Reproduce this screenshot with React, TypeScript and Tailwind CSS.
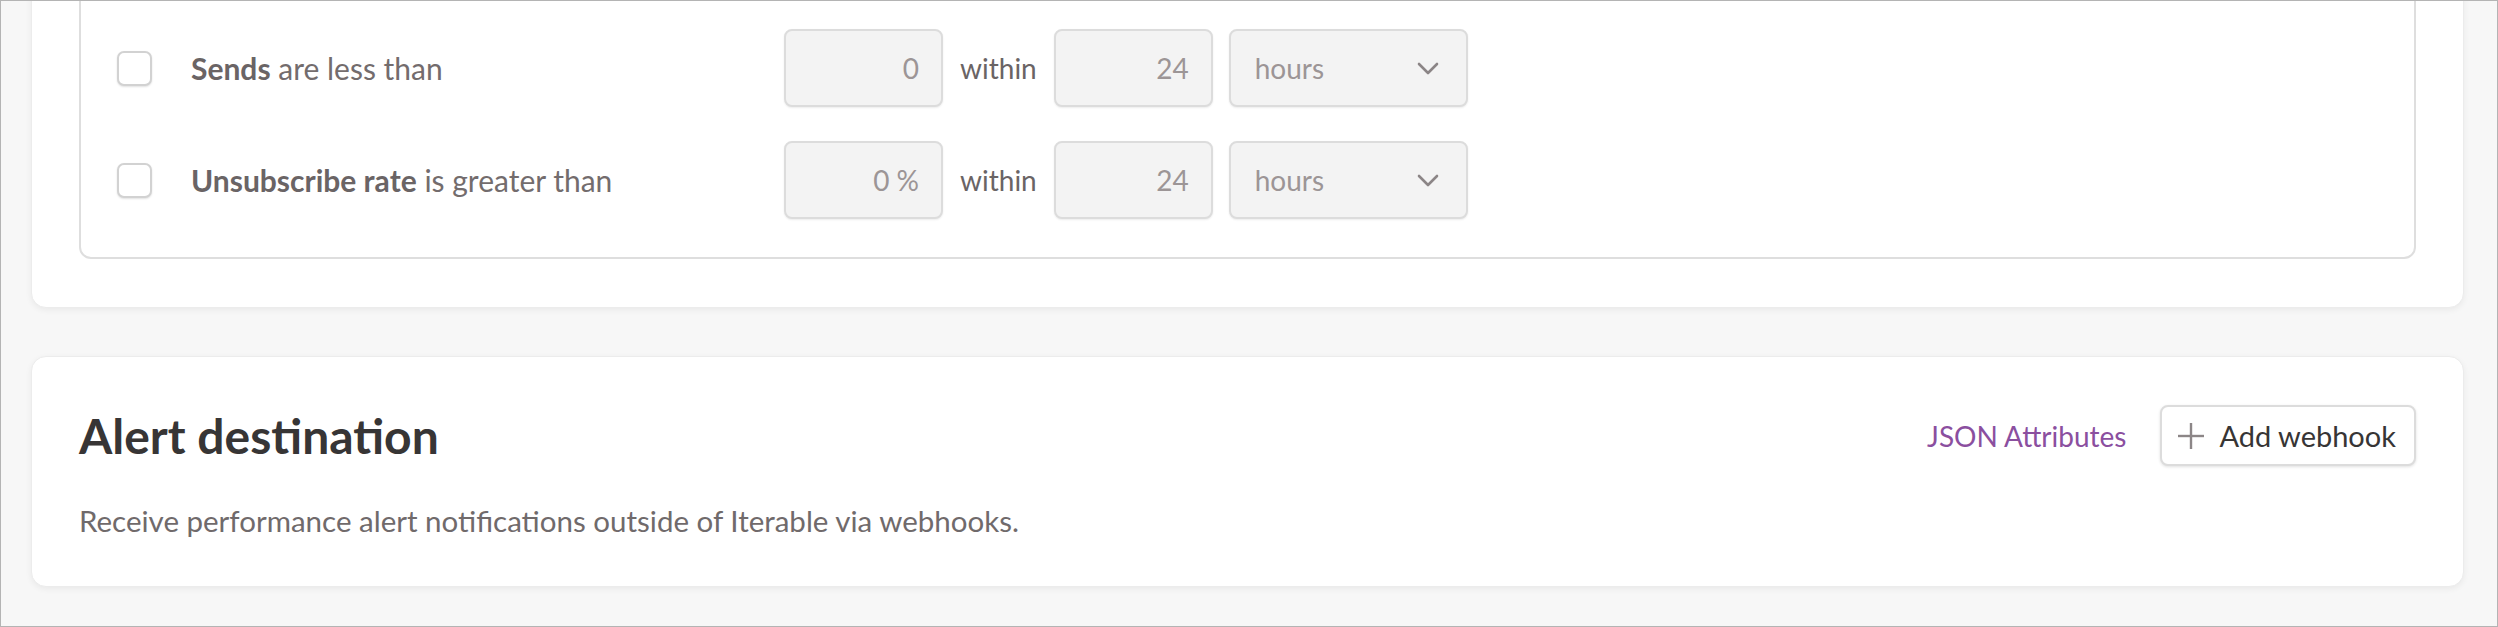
import React from 'react';

const rows = [
  { strong: 'Sends', rest: ' are less than', value: '0', within: '24', unit: 'hours' },
  { strong: 'Unsubscribe rate', rest: ' is greater than', value: '0 %', within: '24', unit: 'hours' },
];

const Chevron = () => (
  <svg width="22" height="13" viewBox="0 0 22 13" fill="none">
    <polyline points="2,2 11,11 20,2" stroke="#8b8586" strokeWidth="2.6" strokeLinecap="round" strokeLinejoin="round" />
  </svg>
);

const PlusIcon = () => (
  <svg width="28" height="28" viewBox="0 0 28 28" fill="none">
    <line x1="14" y1="1" x2="14" y2="27" stroke="#8c8687" strokeWidth="2.4" />
    <line x1="1" y1="14" x2="27" y2="14" stroke="#8c8687" strokeWidth="2.4" />
  </svg>
);

export default function App() {
  return (
    <div
      className="h-[627px] w-full overflow-hidden border border-[#b4b4b4] bg-[#f7f7f7] pl-[30px] pr-[33px]"
      style={{ fontFamily: 'Lato, "Noto Sans", sans-serif' }}
    >
      {/* Alert criteria card (scrolled, top is cut off) */}
      <div className="mt-[-61px] rounded-[15px] border border-[#ececec] bg-white px-[47px] pb-[48px] pt-[48px] shadow-[0_2px_6px_rgba(0,0,0,0.06)]">
        <div className="flex flex-col gap-[34px] rounded-[12px] border-2 border-[#dedede] pb-[38px] pl-[36px] pt-[38px]">
          {rows.map((row) => (
            <div key={row.strong} className="flex h-[78px] items-center">
              <div className="h-[35px] w-[35px] shrink-0 rounded-[7px] border-2 border-[#d2d2d2] bg-white shadow-[0_1px_2px_rgba(0,0,0,0.12)]" />
              <div className="ml-[39px] w-[593px] shrink-0 text-[30px] text-[#736c6d]">
                <span className="font-bold text-[#6a6465]">{row.strong}</span>
                {row.rest}
              </div>
              <div className="flex h-[78px] w-[159px] items-center justify-end rounded-[8px] border-2 border-[#dcdcdc] bg-[#f3f3f3] pr-[22px] text-[28px] text-[#9c9596] shadow-[0_1px_2px_rgba(0,0,0,0.08)]">
                {row.value}
              </div>
              <span className="mx-[17px] text-[28px] text-[#6a6465]">within</span>
              <div className="flex h-[78px] w-[159px] items-center justify-end rounded-[8px] border-2 border-[#dcdcdc] bg-[#f3f3f3] pr-[22px] text-[28px] text-[#9c9596] shadow-[0_1px_2px_rgba(0,0,0,0.08)]">
                {row.within}
              </div>
              <div className="ml-[16px] flex h-[78px] w-[239px] items-center justify-between rounded-[8px] border-2 border-[#dcdcdc] bg-[#f3f3f3] pl-[24px] pr-[27px] text-[28px] text-[#9c9596] shadow-[0_1px_2px_rgba(0,0,0,0.08)]">
                <span>{row.unit}</span>
                <Chevron />
              </div>
            </div>
          ))}
        </div>
      </div>

      {/* Alert destination card */}
      <div className="mt-[48px] rounded-[15px] border border-[#ececec] bg-white px-[47px] pb-[48px] pt-[48px] shadow-[0_2px_6px_rgba(0,0,0,0.06)]">
        <div className="flex h-[61px] items-center justify-between">
          <h2 className="text-[48px] font-bold leading-none text-[#373535]">Alert destination</h2>
          <div className="flex items-center">
            <a className="text-[28px] text-[#8b4f9f]">JSON Attributes</a>
            <button
              type="button"
              className="ml-[34px] flex h-[61px] items-center gap-[14px] rounded-[8px] border-2 border-[#dcdcdc] bg-white pl-[15px] pr-[18px] text-[29px] text-[#373535] shadow-[0_1px_3px_rgba(0,0,0,0.12)]"
            >
              <PlusIcon />
              Add webhook
            </button>
          </div>
        </div>
        <p className="mt-[38px] text-[29.5px] leading-[34px] text-[#706a6b]">
          Receive performance alert notifications outside of Iterable via webhooks.
        </p>
      </div>
    </div>
  );
}
